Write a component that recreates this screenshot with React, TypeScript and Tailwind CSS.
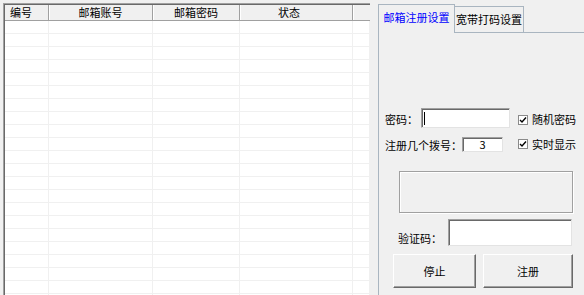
import React from "react";

const rows = Array.from({ length: 22 });

function CheckBox({ label }: { label: string }) {
  return (
    <div className="flex items-center">
      <div className="w-[10px] h-[10px] bg-white border border-[#8a8a8a] flex items-center justify-center">
        <svg width="8" height="8" viewBox="0 0 8 8">
          <path d="M1 4 L3 6 L7 1.5" fill="none" stroke="#000" strokeWidth="1.4" />
        </svg>
      </div>
      <span className="ml-[4px]">{label}</span>
    </div>
  );
}

function WinButton({ label, w }: { label: string; w: string }) {
  return (
    <div
      className={`${w} h-[34px] flex items-center justify-center bg-[#f0f0f0] border border-t-white border-l-white border-r-[#696969] border-b-[#696969] shadow-[inset_-1px_-1px_0_#a0a0a0]`}
    >
      {label}
    </div>
  );
}

export default function App() {
  return (
    <div className="w-[584px] h-[295px] overflow-hidden bg-[#f0f0f0] flex text-[11px] leading-[13px] text-black font-['Noto_Sans_CJK_SC','Liberation_Sans',sans-serif]">
      {/* account list */}
      <div className="mt-[3px] ml-[3px] w-[367px] h-[292px] border-l border-t border-[#a0a0a0] flex flex-col">
        <div className="flex-1 border-l border-t border-[#696969] bg-white flex flex-col overflow-hidden">
          <div className="h-[16px] shrink-0 flex bg-[#f0f0f0] border-b border-[#a0a0a0]">
            <div className="w-[44px] border-r border-[#a0a0a0] flex items-center pl-[5px]">编号</div>
            <div className="w-[104px] border-r border-[#a0a0a0] shadow-[inset_1px_0_0_#fff] flex items-center justify-center">邮箱账号</div>
            <div className="w-[87px] border-r border-[#a0a0a0] shadow-[inset_1px_0_0_#fff] flex items-center justify-center">邮箱密码</div>
            <div className="w-[113px] border-r border-[#a0a0a0] shadow-[inset_1px_0_0_#fff] flex items-center justify-center pr-[14px]">状态</div>
            <div className="flex-1 shadow-[inset_1px_0_0_#fff]" />
          </div>
          {rows.map((_, i) => (
            <div key={i} className="h-[13px] shrink-0 flex border-b border-[#f0f0f0]">
              <div className="w-[44px] border-r border-[#f0f0f0]" />
              <div className="w-[104px] border-r border-[#f0f0f0]" />
              <div className="w-[87px] border-r border-[#f0f0f0]" />
              <div className="w-[113px] border-r border-[#f0f0f0]" />
              <div className="flex-1 border-r border-[#f0f0f0]" />
            </div>
          ))}
        </div>
      </div>

      {/* settings tabs */}
      <div className="ml-[8px] flex-1 flex flex-col pt-[4px]">
        <div className="h-[28px] shrink-0 flex items-end">
          <div className="relative z-10 -mb-px w-[77px] h-[29px] bg-[#f0f0f0] border border-b-0 border-[#a9b5c0] flex justify-center pt-[6px] text-[#0000ff]">
            邮箱注册设置
          </div>
          <div className="w-[69px] h-[26px] bg-[#f0f0f0] border border-b-0 border-l-0 border-[#a9b5c0] flex justify-center pt-[6px]">
            宽带打码设置
          </div>
        </div>
        <div className="flex-1 border-l border-t border-[#a9b5c0] flex flex-col">
          <div className="mt-[75px] h-[20px] flex items-center pl-[6px]">
            <span className="w-[36px] pt-[3px]">密码：</span>
            <div className="w-[89px] h-[20px] bg-white border border-[#a0a0a0] border-b-[#e3e3e3] border-r-[#e3e3e3] shadow-[inset_1px_1px_0_#696969] flex items-center">
              <span className="ml-[2px] w-px h-[13px] bg-black" />
            </div>
            <div className="ml-[8px] pt-[3px]">
              <CheckBox label="随机密码" />
            </div>
          </div>

          <div className="mt-[8px] h-[16px] flex items-center pl-[6px]">
            <span className="w-[77px] pt-[2px]">注册几个拨号：</span>
            <div className="w-[41px] h-[15px] bg-white border border-[#a0a0a0] border-b-[#e3e3e3] border-r-[#e3e3e3] shadow-[inset_1px_1px_0_#696969] flex items-center justify-center">
              3
            </div>
            <div className="ml-[15px]">
              <CheckBox label="实时显示" />
            </div>
          </div>

          <div className="mt-[19px] ml-[20px] w-[174px] h-[42px] border border-[#a0a0a0] shadow-[inset_1px_1px_0_#fff,1px_1px_0_#fff]" />

          <div className="mt-[6px] ml-[19px] flex items-center">
            <span className="w-[50px] pt-[11px]">验证码：</span>
            <div className="w-[124px] h-[27px] bg-white border border-[#a0a0a0] border-b-[#e3e3e3] border-r-[#e3e3e3] shadow-[inset_1px_1px_0_#696969]" />
          </div>

          <div className="mt-[8px] ml-[14px] flex gap-[7px]">
            <WinButton label="停止" w="w-[83px]" />
            <WinButton label="注册" w="w-[90px]" />
          </div>
        </div>
      </div>
    </div>
  );
}
